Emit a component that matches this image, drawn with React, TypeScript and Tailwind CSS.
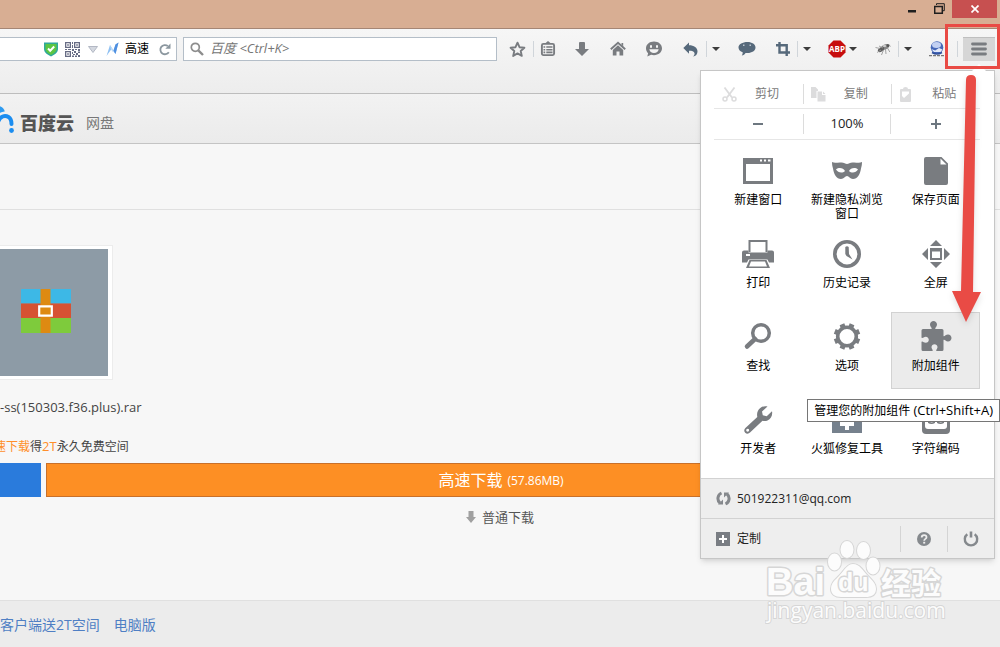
import React from 'react';

type IconProps = { className?: string };

/* ---------- toolbar icons ---------- */

const ShieldIcon = () => (
  <svg width="16" height="16" viewBox="0 0 16 16">
    <path d="M1 1.500h14v6.500c0 3.500-3.500 5.800-7 7.500-3.500-1.700-7-4-7-7.500z" fill="#2fa89b" />
    <path d="M2.500 3h11v5c0 2.600-2.700 4.500-5.500 5.900C5.200 12.500 2.500 10.600 2.500 8z" fill="#5cc543" />
    <path d="M5 7.500l2.200 2.200L11.200 5.500" fill="none" stroke="#fff" strokeWidth="2" />
  </svg>
);

const QrIcon = () => (
  <svg width="15" height="15" viewBox="0 0 15 15" fill="#676c84">
    <path fillRule="evenodd" d="M0 0h6v6H0zM1.300 1.300v3.400h3.400V1.300zM9 0h6v6H9zM10.300 1.300v3.400h3.400V1.300zM0 9h6v6H0zM1.300 10.300v3.400h3.400v-3.400z" />
    <path d="M2.200 2.200h1.600v1.600H2.200zM11.200 2.200h1.600v1.600h-1.600zM2.200 11.200h1.600v1.600H2.200zM7 0h1v2H7zM7 3h1v3H7zM0 7h2v1H0zM3 7h3v1H3zM7 7h2v2H7zM10 7h2v1h-2zM13 7h2v2h-2zM9 9h2v2H9zM11 11h2v2h-2zM13 9.500h2v1.500h-2zM7 10h1v2H7zM8 12h2v1H8zM7 13.500h2V15H7zM10 13.500h2V15h-2zM13 13h2v2h-2z" />
  </svg>
);

const BoltIcon = () => (
  <svg width="13" height="15" viewBox="0 0 13 15">
    <path d="M0.500 14L4 3l3.500 5.500L9.500 2.500l3-2-3 11.500L5.500 7z" fill="#8fc0f2" />
    <path d="M9.500 2.500l3-2-3 11.500-2-3.500z" fill="#4f8fe0" />
    <path d="M4 3l3.500 5.500-.8 1.500L4.800 7z" fill="#bcdcf8" />
  </svg>
);

const ReloadIcon = () => (
  <svg width="12" height="13" viewBox="0 0 12 13">
    <path d="M9.800 9.200A4.600 4.600 0 1 1 8.800 3" fill="none" stroke="#8b979f" strokeWidth="1.800" />
    <path d="M6.300 5.700h5.200V0.600z" fill="#8b979f" />
  </svg>
);

const LoupeIcon = () => (
  <svg width="14" height="14" viewBox="0 0 14 14" fill="none" stroke="#8d8d8d">
    <circle cx="5.300" cy="5.300" r="4" strokeWidth="1.700" />
    <path d="M8.300 8.300L13 13" strokeWidth="2.400" />
  </svg>
);

const StarIcon = () => (
  <svg width="17" height="17" viewBox="0 0 17 17">
    <path d="M8.500 1.700l2 4.500 4.900.5-3.700 3.300 1.100 4.900-4.300-2.500-4.300 2.500 1.100-4.900L1.600 6.700l4.900-.5z" fill="none" stroke="#797c80" strokeWidth="1.900" strokeLinejoin="round" />
  </svg>
);

const ListIcon = () => (
  <svg width="16" height="16" viewBox="0 0 16 16">
    <path d="M5 2.500L8 0l3 2.500" fill="#797c80" />
    <rect x="1.900" y="2.900" width="12.200" height="11.200" rx="1.500" fill="none" stroke="#797c80" strokeWidth="1.900" />
    <path d="M3.500 6h1.700M6.300 6h6.200M3.500 8.700h1.700M6.300 8.700h6.200M3.500 11.400h1.700M6.300 11.400h6.200" stroke="#797c80" strokeWidth="1.600" />
  </svg>
);

const DownIcon = () => (
  <svg width="14" height="14" viewBox="0 0 14 14">
    <path d="M4 1q0-1 1-1h4q1 0 1 1v6h4l-7 7-7-7h4z" fill="#797c80" />
  </svg>
);

const HomeIcon = () => (
  <svg width="16" height="16" viewBox="0 0 16 16">
    <path d="M0.800 8.300L8 1.700l7.200 6.600" fill="none" stroke="#797c80" strokeWidth="1.900" />
    <path d="M2.800 9L8 4.300 13.200 9v5.500H9.500V10.500h-3v4H2.800zM11.500 2h1.700v3.500l-1.700-1.500z" fill="#797c80" />
  </svg>
);

const SmileIcon = () => (
  <svg width="16" height="16" viewBox="0 0 16 16">
    <path d="M8 0.500c4.500 0 8 2.900 8 6.800s-3.500 6.900-8 6.900c-1 0-2-.2-2.900-.4L1.300 15.500l.8-3.300C.8 11 0 9.300 0 7.300 0 3.400 3.500.5 8 .5z" fill="#797c80" />
    <path d="M4 4.200h2v2.600H4zM10 4.200h2v2.600h-2zM3.300 8.300h9.400c-.3 2.400-2.200 3.700-4.700 3.700s-4.400-1.300-4.700-3.700z" fill="#f4f4f4" />
  </svg>
);

const UndoIcon = () => (
  <svg width="15" height="15" viewBox="0 0 15 15">
    <path d="M6 0.500v2.700c5 0 8.500 2.500 8.500 6.200 0 2.700-1.700 4.600-4.500 5.200 1.300-1.200 1.700-2.400 1.500-3.700C11 9.300 9.200 8.700 6 8.700v3L0.300 6z" fill="#56697b" />
  </svg>
);

const ChatIcon = () => (
  <svg width="18" height="14" viewBox="0 0 18 14">
    <path d="M9.500 0C14 0 17.500 2.300 17.500 5.500S14 11 9.500 11l-2-.1c-.8 1.300-2 2.300-3.700 2.700.7-1 1-2 .9-3.300C2.200 9.500 0.500 7.700 0.500 5.500.5 2.300 4.500 0 9.500 0z" fill="#56697b" />
    <path d="M5 2.500h1.500v1.500H5zM11.500 2.500h1.500v1.500h-1.500z" fill="#b9c4cd" />
  </svg>
);

const CropIcon = () => (
  <svg width="14" height="14" viewBox="0 0 14 14" fill="none" stroke="#56697b" strokeWidth="2.400">
    <path d="M3.500 0v10.500H14" />
    <path d="M0 3.300h10.700V14" />
  </svg>
);

const AbpIcon = () => (
  <svg width="18" height="18" viewBox="0 0 18 18">
    <path d="M5.500.5h7l5 5v7l-5 5h-7l-5-5v-7z" fill="#c70d0d" />
    <text x="9" y="12" textAnchor="middle" fontSize="8" fontWeight="700" fill="#fff" fontFamily="Open Sans, sans-serif">ABP</text>
  </svg>
);

const FlyIcon = () => (
  <svg width="16" height="14" viewBox="0 0 16 14">
    <ellipse cx="10" cy="5" rx="4.200" ry="2.600" transform="rotate(-25 10 5)" fill="#888" />
    <ellipse cx="6" cy="7.500" rx="3.500" ry="2" transform="rotate(-35 6 7.500)" fill="#5d5d5d" />
    <circle cx="13" cy="3.500" r="1.500" fill="#555" />
    <path d="M0.500 5.500l4.500 1M2 10.500L6 8M6.500 13l2-5M11 12l-.5-5M14.800 10L12.500 6M13.800 2.500L15.500 4.500M4 4l4 2" stroke="#999" strokeWidth="0.900" />
    <ellipse cx="9.500" cy="4" rx="1.800" ry="1" fill="#d0d0d0" />
  </svg>
);

const GlobeIcon = () => (
  <svg width="16" height="16" viewBox="0 0 16 16">
    <circle cx="8" cy="6.500" r="6.300" fill="#4668b8" />
    <ellipse cx="7.500" cy="4" rx="4.500" ry="3" fill="#c3d1f2" />
    <path d="M2.200 8l4 1.500L10 7l3.500 1.500-2 2.500H5z" fill="#e3eafa" />
    <path d="M3 11.500q5 3 10 0" fill="none" stroke="#2f4f9c" strokeWidth="1.500" />
    <path d="M0 14.700h16" stroke="#777" strokeWidth="1.200" strokeDasharray="3 1" />
  </svg>
);

const Caret = () => (
  <svg width="8" height="4" viewBox="0 0 8 4">
    <path d="M0 0h8L4 4z" fill="#3c3c3c" />
  </svg>
);

/* ---------- menu icons ---------- */

const WindowIcon = ({ className }: IconProps) => (
  <svg className={className} viewBox="0 0 32 32">
    <path fillRule="evenodd" d="M1 3h30v26H1zM4 9v17h24V9zM18 4.500v2h2v-2zM22 4.500v2h2v-2zM26 4.500v2h2.500v-2z" fill="#797c80" />
  </svg>
);

const MaskIcon = ({ className }: IconProps) => (
  <svg className={className} viewBox="0 0 32 32">
    <path
      fillRule="evenodd"
      d="M1 7c3 1.500 6 0 9.500.5 2.500.3 4 1.500 5.500 1.500s3-1.200 5.500-1.500C25 7 28 8.500 31 7c0 3-.5 4.500-1 6.500-1 6-3.500 10.500-8 10.500-3 0-4-3-6-3s-3 3-6 3c-4.500 0-7-4.500-8-10.500C1.500 11.500 1 10 1 7zM5 14.500c2 3.500 6.500 4 9 1.500-1.500-3-6-4.300-9-1.500zM27 14.500c-3-2.800-7.500-1.500-9 1.500 2.500 2.500 7 2 9-1.500z"
      fill="#797c80"
    />
  </svg>
);

const PageIcon = ({ className }: IconProps) => (
  <svg className={className} viewBox="0 0 32 32">
    <path fillRule="evenodd" d="M6 2h15.500L28 8.500V28q0 2-2 2H6q-2 0-2-2V4q0-2 2-2zM20.500 3.500V9.500H26.500z" fill="#797c80" />
  </svg>
);

const PrinterIcon = ({ className }: IconProps) => (
  <svg className={className} viewBox="0 0 32 32">
    <path fillRule="evenodd" d="M6.500 2h19v12h-19zM8.500 4v10h15V4z" fill="#797c80" />
    <path fillRule="evenodd" d="M2 12.500h4.500v2h19v-2H30q2 0 2 2v10h-5l-1.500-3h-19L5 24.500H0v-10q0-2 2-2zM4 16v2h4v-2z" fill="#797c80" />
    <path fillRule="evenodd" d="M7.500 22h17L28 30H4zM9 23.500L7 28.500h18l-2-5z" fill="#797c80" />
  </svg>
);

const ClockIcon = ({ className }: IconProps) => (
  <svg className={className} viewBox="0 0 32 32">
    <circle cx="16" cy="16" r="12.200" fill="none" stroke="#797c80" strokeWidth="3.600" />
    <path d="M14.300 9q1.700-1.500 3.400 0l.3 7 3.500 5.500-6-3.500-1.200-2z" fill="#797c80" />
  </svg>
);

const FullscreenIcon = ({ className }: IconProps) => (
  <svg className={className} viewBox="0 0 32 32">
    <path d="M16 2l6 6H10zM16 30l6-6H10zM2 16l6-6v12zM30 16l-6-6v12z" fill="#797c80" />
    <path fillRule="evenodd" d="M10 10h12v12H10zM12 13.500V20h8v-6.500z" fill="#797c80" />
  </svg>
);

const FindIcon = ({ className }: IconProps) => (
  <svg className={className} viewBox="0 0 32 32" fill="none" stroke="#797c80">
    <circle cx="19" cy="12" r="8.300" strokeWidth="3.500" />
    <path d="M13 18L5 25.500" strokeWidth="4.500" strokeLinecap="round" />
  </svg>
);

const GearIcon = ({ className }: IconProps) => (
  <svg className={className} viewBox="0 0 32 32" fill="none" stroke="#797c80">
    <circle cx="16" cy="15.500" r="9.300" strokeWidth="3.600" />
    {[22.5, 67.5, 112.5, 157.5, 202.5, 247.5, 292.5, 337.5].map((angle) => (
      <path key={angle} d="M13.500 4h5" strokeWidth="3.500" transform={`rotate(${angle} 16 15.500)`} />
    ))}
  </svg>
);

const PuzzleIcon = ({ className }: IconProps) => (
  <svg className={className} viewBox="0 0 32 32">
    <path
      d="M3 8h8.500c1-1-1.500-2-1.500-4.500C10 1.500 11.800 0 13.500 0S17 1.500 17 3.500C17 6 14.500 7 15.500 8H22q1.500 0 1.500 1.500v5.500c1 1 2-1.500 4.500-1.500 2 0 3.500 1.800 3.500 3.500S30 20.500 28 20.500c-2.500 0-3.500-2.500-4.500-1.500v9.500q0 1.500-1.500 1.500h-5.500c-1-1 1-2 1-4 0-1.500-1.500-2.700-3-2.700s-3 1.200-3 2.700c0 2 2 3 1 4H3q-1.500 0-1.500-1.500V21c1-1.500 2 .8 4.300.8 1.700 0 3-1.300 3-3s-1.300-3.100-3-3.100c-2.300 0-3.300 2.300-4.300.8v-7Q1.500 8 3 8z"
      fill="#797c80"
    />
  </svg>
);

const WrenchIcon = ({ className }: IconProps) => (
  <svg className={className} viewBox="0 0 32 32">
    <path fillRule="evenodd" d="M25.500 2.500L20 7.500l.8 3.700 3.900 1 5.300-5c.8 4-1 8-4.500 9.300-1.800.7-3.500.6-5 .2L8 28.500c-1.300 1.500-3.500 1.500-4.800.2s-1.300-3.400.2-4.700L15.300 13c-.8-3.500.4-7 3-9 2-1.500 4.700-2.200 7.200-1.500zM5.600 24.800a1.500 1.500 0 1 0 .1 3 1.500 1.500 0 0 0-.1-3z" fill="#797c80" />
  </svg>
);

const RepairIcon = ({ className }: IconProps) => (
  <svg className={className} viewBox="0 0 32 32">
    <path d="M10 2h12v6H10z" fill="#76818d" />
    <path d="M1 7h30v22H1z" fill="#76818d" />
    <path d="M14 12h4v6h5v4h-5v4h-4v-4H9v-4h5z" fill="#fff" />
  </svg>
);

const EncodingIcon = ({ className }: IconProps) => (
  <svg className={className} viewBox="0 0 32 32">
    <rect x="2" y="3" width="28" height="27" rx="4" fill="#797c80" />
    <path d="M5 8h22v14q0 3-3 3H8q-3 0-3-3z" fill="#fff" />
    <path d="M8 16q4 5 7 0v3q-3.500 2-7 0zM17 16q4 5 7 0v3q-3.500 2-7 0z" fill="#797c80" />
  </svg>
);

const ScissorsIcon = () => (
  <svg width="15" height="15" viewBox="0 0 15 15" fill="none" stroke="#dcdcdd" strokeWidth="1.500">
    <path d="M2.500 0.500l7.500 10M12.500 0.500L5 10.500" strokeWidth="1.800" />
    <circle cx="3" cy="12" r="2" />
    <circle cx="12" cy="12" r="2" />
  </svg>
);

const CopyIcon = () => (
  <svg width="15" height="15" viewBox="0 0 15 15" fill="#dcdcdd">
    <path d="M0 0h4.500L7 2.500V4H5.500v7H0z" />
    <path d="M6.500 4.500H11V8h3.500v6.500h-8zM12 4.500L14.500 7H12z" />
  </svg>
);

const PasteIcon = () => (
  <svg width="15" height="15" viewBox="0 0 15 15">
    <path fillRule="evenodd" d="M4 2q0-2 2.500-2T9 2h2q1 0 1 1v11q0 1-1 1H2q-1 0-1-1V3q0-1 1-1zM3 4.500V9l2 2 5-4.500v-2z" fill="#dcdcdd" />
  </svg>
);

const SyncIcon = () => (
  <svg width="15" height="15" viewBox="0 0 15 15">
    <path d="M5.500 2A6 6 0 0 0 4 12M9.500 13A6 6 0 0 0 11 3" fill="none" stroke="#85888c" strokeWidth="3" />
    <path d="M2 13.500h5V8.500zM13 1.500H8v5z" fill="#85888c" />
  </svg>
);

const PlusSquareIcon = () => (
  <svg width="14" height="14" viewBox="0 0 14 14">
    <path d="M0 0h14v14H0z" fill="#797d83" />
    <path d="M7 3v8M3 7h8" stroke="#fff" strokeWidth="2" />
  </svg>
);

const HelpIcon = () => (
  <svg width="14" height="14" viewBox="0 0 14 14">
    <circle cx="7" cy="7" r="7" fill="#85898d" />
    <path d="M4.700 5.500c0-3.300 4.800-3 4.800-.3C9.500 7 7.200 6.800 7.200 8.800" fill="none" stroke="#eee" strokeWidth="1.800" />
    <path d="M6.200 9.800h2v1.800h-2z" fill="#eee" />
  </svg>
);

const PowerIcon = () => (
  <svg width="16" height="16" viewBox="0 0 16 16" fill="none" stroke="#85898d">
    <path d="M4.300 3.200a6.200 6.200 0 1 0 7.400 0" strokeWidth="2.400" />
    <path d="M8 0.500v6" strokeWidth="2.600" />
  </svg>
);

/* ---------- pieces ---------- */

const Sep = () => <span className="h-4 w-px bg-[#d0d5da]" />;

const ToolButton: React.FC<{ label: string; className: string; children: React.ReactNode }> = ({ label, className, children }) => (
  <button aria-label={label} className={`flex h-6 items-center justify-center ${className}`}>
    {children}
  </button>
);

const TitleBar = () => (
  <div className="flex h-[29px] items-start justify-end border-b border-[#a58675] bg-[#d8ae93] pr-[3px]">
    <button aria-label="最小化" className="flex h-[18px] w-7 items-center justify-center">
      <svg width="8" height="14" viewBox="0 0 8 14"><path d="M0 8h8v2.500H0z" fill="#1f1f1f" /></svg>
    </button>
    <button aria-label="还原" className="flex h-4 w-[26px] items-center justify-center">
      <svg width="11" height="11" viewBox="0 0 11 11" fill="none" stroke="#1f1f1f">
        <path d="M2.500 2V.7h7.800v7H9" />
        <path d="M.7 3.500h7.600v6.800H.7z" strokeWidth="1.500" />
      </svg>
    </button>
    <button aria-label="关闭" className="flex h-[18px] w-[45px] items-center justify-center bg-[#c75050]">
      <svg width="8" height="8" viewBox="0 0 8 8"><path d="M.5.5l7 7M7.500.5l-7 7" stroke="#fff" strokeWidth="1.700" /></svg>
    </button>
  </div>
);

const Toolbar = () => (
  <div className="flex h-[65px] items-start border-b border-[#bdbdbd] bg-gradient-to-b from-[#f6f6f6] to-[#ededed] pt-2 pr-[5px]">
    <div className="flex h-6 w-[177px] shrink-0 items-center border border-l-0 border-[#b4bec8] bg-white pr-[5px]">
      <input aria-label="地址" className="w-0 min-w-0 flex-1 bg-transparent outline-none" />
      <ShieldIcon />
      <span className="ml-1.5"><QrIcon /></span>
      <svg className="ml-2" width="10" height="7" viewBox="0 0 10 7"><path d="M.5.5h9L5 6.500z" fill="#d4d8e0" stroke="#b3b8c4" /></svg>
      <span className="ml-2"><BoltIcon /></span>
      <span className="ml-1.5 text-xs text-black">高速</span>
      <button aria-label="刷新" className="ml-2.5"><ReloadIcon /></button>
    </div>
    <label className="ml-1.5 flex h-6 min-w-0 flex-1 items-center gap-1.5 border border-[#b4bec8] bg-white pl-1.5">
      <LoupeIcon />
      <input aria-label="搜索" placeholder="百度 <Ctrl+K>" className="min-w-0 flex-1 bg-transparent text-[13px] italic outline-none placeholder:text-[#757575]" />
    </label>
    <div className="ml-1 flex shrink-0 items-center">
      <ToolButton label="收藏" className="w-8"><StarIcon /></ToolButton>
      <Sep />
      <ToolButton label="书签" className="w-7"><ListIcon /></ToolButton>
      <ToolButton label="下载" className="w-10"><DownIcon /></ToolButton>
      <ToolButton label="主页" className="w-8"><HomeIcon /></ToolButton>
      <ToolButton label="聊天" className="w-10"><SmileIcon /></ToolButton>
      <ToolButton label="撤销" className="w-8"><UndoIcon /></ToolButton>
      <Sep />
      <ToolButton label="更多撤销" className="w-[18px]"><Caret /></ToolButton>
      <ToolButton label="消息" className="w-11"><ChatIcon /></ToolButton>
      <ToolButton label="截图" className="w-7"><CropIcon /></ToolButton>
      <Sep />
      <ToolButton label="截图选项" className="w-[18px]"><Caret /></ToolButton>
      <ToolButton label="Adblock Plus" className="w-[52px] gap-[3px]"><AbpIcon /><Caret /></ToolButton>
      <ToolButton label="Firebug" className="w-[30px]"><FlyIcon /></ToolButton>
      <Sep />
      <ToolButton label="Firebug 选项" className="w-[18px]"><Caret /></ToolButton>
      <ToolButton label="代理" className="w-10"><GlobeIcon /></ToolButton>
      <Sep />
      <ToolButton label="打开菜单" className="ml-[5px] w-8 border-t border-[#bfbfbf] bg-[#d6d6d6]">
        <svg width="16" height="16" viewBox="0 0 16 16"><path d="M1.500 2h13M1.500 7h13M1.500 12h13" stroke="#797c80" strokeWidth="2.800" strokeLinecap="round" /></svg>
      </ToolButton>
    </div>
  </div>
);

const SiteHeader = () => (
  <header className="flex h-[50px] items-center border-b border-[#c4c4c4] bg-gradient-to-b from-[#f2f2f2] to-[#ebebeb] pt-2">
    <svg className="h-8 w-[15px] self-start" viewBox="0 0 15 32" fill="none">
      <circle cx="-2" cy="11" r="7" fill="#2f9bf0" />
      <path d="M-2 19C0 13 5 12 8.500 14c3 1.800 3.500 4.500 3 8" stroke="#f0f0f0" strokeWidth="7" />
      <path d="M-2 20C0 14 5 13 8.500 15c2.500 1.500 3 3.500 3 7" stroke="#1b8df0" strokeWidth="4" strokeLinecap="round" />
      <circle cx="11.500" cy="28.500" r="2.400" fill="#1b8df0" />
    </svg>
    <span className="ml-[5px] text-lg font-black text-[#555]">百度云</span>
    <span className="ml-3 text-sm text-[#777]">网盘</span>
  </header>
);

const RarIcon = () => (
  <svg width="50" height="44" viewBox="0 0 50 44">
    <path d="M0 0h50v14.500H0z" fill="#3db8e6" />
    <path d="M0 14.500h50v14.500H0z" fill="#d65233" />
    <path d="M0 29h50v15H0z" fill="#7ecb3c" />
    <path d="M19.500 0h10v44h-10z" fill="#de8a12" />
    <path d="M18.200 17.300h12.600v9.400H18.200z" fill="#de8a12" stroke="#fff" strokeWidth="2.200" />
  </svg>
);

const DownloadPage = () => (
  <main>
    <div className="h-[66px] border-b border-[#e0e0e0]" />
    <div className="mt-[35px] flex h-[135px] w-[113px] border border-l-0 border-[#ececec] bg-white py-[3px] pr-1">
      <div className="flex flex-1 items-center bg-[#8d9ba6] pb-1 pl-[21px]">
        <RarIcon />
      </div>
    </div>
    <p className="mt-[17px] text-[13px] leading-5 text-[#444]">-ss(150303.f36.plus).rar</p>
    <p className="mt-[19px] -ml-1.5 text-xs leading-5 text-[#444]">
      <span className="text-[#ff8f2b]">速下载</span>得<span className="text-[13px] text-[#ff8f2b]">2T</span>永久免费空间
    </p>
    <div className="mt-1.5 flex h-[34px] gap-[5px] pr-11">
      <button aria-label="保存到网盘" className="w-[41px] bg-[#2a7bdc]" />
      <button className="flex flex-1 items-center justify-center gap-[5px] border border-[#c8702a] bg-[#fd8f24] text-base text-white">
        高速下载 <span className="pt-0.5 text-xs">(57.86MB)</span>
      </button>
    </div>
    <div className="mt-2.5 flex justify-center pr-[46px] pl-[46px]">
      <button className="flex items-center gap-1.5 text-[13px] leading-5 text-[#555]">
        <svg width="10" height="12" viewBox="0 0 10 12"><path d="M2.500 0h5v6H10l-5 6-5-6h2.500z" fill="#a0a0a0" /></svg>
        普通下载
      </button>
    </div>
  </main>
);

const menuItems: { label: string; icon: React.ElementType; active?: boolean }[] = [
  { label: '新建窗口', icon: WindowIcon },
  { label: '新建隐私浏览窗口', icon: MaskIcon },
  { label: '保存页面', icon: PageIcon },
  { label: '打印', icon: PrinterIcon },
  { label: '历史记录', icon: ClockIcon },
  { label: '全屏', icon: FullscreenIcon },
  { label: '查找', icon: FindIcon },
  { label: '选项', icon: GearIcon },
  { label: '附加组件', icon: PuzzleIcon, active: true },
  { label: '开发者', icon: WrenchIcon },
  { label: '火狐修复工具', icon: RepairIcon },
  { label: '字符编码', icon: EncodingIcon },
];

const editItems: { label: string; icon: React.ElementType }[] = [
  { label: '剪切', icon: ScissorsIcon },
  { label: '复制', icon: CopyIcon },
  { label: '粘贴', icon: PasteIcon },
];

const MenuPanel = () => (
  <div className="absolute top-[70px] right-[5px] w-[295px] border border-[#c6c6c6] bg-white text-xs shadow-md">
    <svg className="absolute -top-2 right-1.5" width="18" height="9" viewBox="0 0 18 9"><path d="M1 9l8-8 8 8z" fill="#fff" /></svg>
    <div className="pt-[9px] pr-3.5 pb-1.5 pl-[13px]">
      <div className="grid h-[29px] grid-cols-3 items-start border-b border-[#e6e6e6] pt-1">
        {editItems.map((item) => (
          <button key={item.label} className="flex h-5 items-center gap-[18px] border-l border-[#dcdcdc] pl-[7px] text-[#7a7a7a] first:border-transparent">
            <item.icon />
            {item.label}
          </button>
        ))}
      </div>
      <div className="grid h-[31px] grid-cols-3 items-center border-b border-[#e6e6e6]">
        <button aria-label="缩小" className="flex h-5 items-center justify-center">
          <svg width="10" height="10" viewBox="0 0 10 10"><path d="M0 5h10" stroke="#6d7780" strokeWidth="2" /></svg>
        </button>
        <button className="flex h-5 items-center justify-center border-x border-[#dcdcdc] text-[13px] text-[#222]">100%</button>
        <button aria-label="放大" className="flex h-5 items-center justify-center">
          <svg width="10" height="10" viewBox="0 0 10 10"><path d="M0 5h10M5 0v10" stroke="#6d7780" strokeWidth="2" /></svg>
        </button>
      </div>
      <div className="mt-1.5 grid grid-cols-3 gap-y-1.5">
        {menuItems.map((item) => (
          <button
            key={item.label}
            className={`flex h-[77px] flex-col items-center border pt-2 leading-[14px] text-black ${
              item.active ? 'border-[#d2d2d2] bg-[#ebebeb]' : 'border-transparent'
            }`}
          >
            <item.icon className="h-8 w-8" />
            <span className="mt-1.5 max-w-[78px]">{item.label}</span>
          </button>
        ))}
      </div>
    </div>
    <button className="flex h-10 w-full items-center gap-1.5 border-t border-[#d2d2d2] bg-[#eee] pl-[15px] text-[#222]">
      <SyncIcon />
      501922311@qq.com
    </button>
    <div className="flex h-10 items-center border-t border-[#d2d2d2] bg-[#eee] text-[#222]">
      <button className="flex flex-1 items-center gap-[7px] pl-[15px]">
        <PlusSquareIcon />
        定制
      </button>
      <button aria-label="帮助" className="flex h-[26px] w-[47px] items-center justify-center border-l border-[#d4d4d4]"><HelpIcon /></button>
      <button aria-label="退出" className="flex h-[26px] w-[47px] items-center justify-center border-l border-[#d4d4d4]"><PowerIcon /></button>
    </div>
  </div>
);

const Watermark = () => (
  <svg className="pointer-events-none absolute top-[538px] right-[50px]" width="185" height="90" viewBox="0 0 185 90" stroke="#d6d6d6" fill="#fcfcfc" paintOrder="stroke">
    <g strokeWidth="2">
      <ellipse cx="82" cy="11.500" rx="6.500" ry="8.500" />
      <ellipse cx="98.500" cy="12.500" rx="6.500" ry="8.500" />
      <ellipse cx="69.500" cy="24" rx="6.500" ry="8.500" />
      <ellipse cx="108" cy="28" rx="6.500" ry="8.500" />
      <path d="M88 26c7 0 10 7 15 12s8 8 8 13c0 6-5 8-10 8H76c-6 0-10-3-10-8 0-6 4-9 8-13s8-12 14-12z" />
    </g>
    <g strokeWidth="3" strokeLinejoin="round" fontFamily="Liberation Sans, sans-serif" fontWeight="700">
      <text x="1" y="57" fontSize="38">Bai</text>
      <text x="73" y="53" fontSize="25">du</text>
      <text x="116" y="56" fontSize="30" fontFamily="Noto Sans CJK SC, sans-serif">经验</text>
    </g>
    <text x="2" y="80" fontSize="21" strokeWidth="2" fontFamily="Open Sans, sans-serif">jingyan.baidu.com</text>
  </svg>
);

const Annotations = () => (
  <>
    <div className="pointer-events-none absolute top-6 right-0 h-[45px] w-[55px] border-[3px] border-[#e94b45]" />
    <svg className="pointer-events-none absolute top-[72px] right-4 drop-shadow-md" width="36" height="252" viewBox="0 0 36 252">
      <path d="M18 8q0-5 5-5t5 5l-3 212h8l-15 30L4 219h9z" fill="#e94b45" />
    </svg>
  </>
);

export default function App() {
  return (
    <div className="relative flex min-h-screen flex-col overflow-hidden bg-[#f7f7f7] font-['Open_Sans','Noto_Sans_CJK_SC',sans-serif]">
      <TitleBar />
      <Toolbar />
      <SiteHeader />
      <DownloadPage />
      <footer className="mt-auto flex h-[47px] items-center gap-3.5 border-t border-[#e0e0e0] bg-[#ececec] pt-0.5 text-sm text-[#4f7fc4]">
        <a href="#client">客户端送2T空间</a>
        <a href="#desktop">电脑版</a>
      </footer>
      <MenuPanel />
      <div role="tooltip" className="absolute top-[399px] right-0 border border-[#767676] bg-white px-1.5 text-xs leading-[21px] whitespace-nowrap text-black">
        管理您的附加组件 <span className="text-[13px]">(Ctrl+Shift+A)</span>
      </div>
      <Annotations />
      <Watermark />
    </div>
  );
}
